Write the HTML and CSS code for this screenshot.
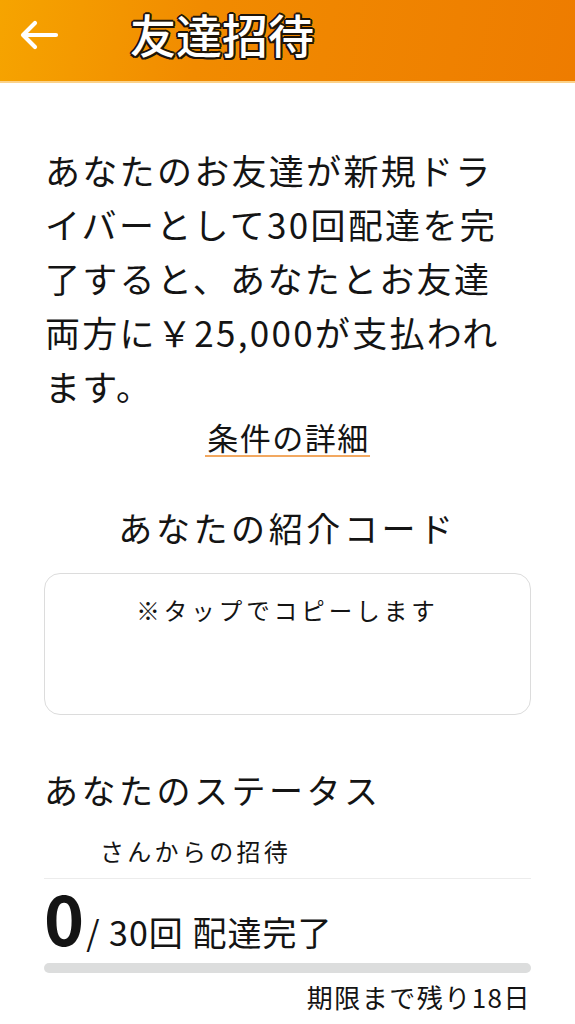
FILE: index.html
```html
<!DOCTYPE html>
<html lang="ja">
<head>
<meta charset="utf-8">
<title>友達招待</title>
<link rel="stylesheet" href="styles.css">
</head>
<body>
<header class="appbar">
  <svg class="back" width="40" height="30" viewBox="0 0 40 30" aria-hidden="true">
    <path d="M37 15 H5 M16 3 L4 15 L16 27" fill="none" stroke="#fff" stroke-width="4.2" stroke-linecap="round" stroke-linejoin="round"/>
  </svg>
  <h1 class="title">友達招待</h1>
</header>
<main class="content">
  <p class="intro">あなたのお友達が新規ドライバーとして30回配達を完了すると、あなたとお友達両方に￥25,000が支払われます。</p>
  <div class="details-row"><a class="details" href="#">条件の詳細</a></div>
  <h2 class="code-title">あなたの紹介コード</h2>
  <div class="code-box">
    <p class="code-hint">※タップでコピーします</p>
  </div>
  <h2 class="status-title">あなたのステータス</h2>
  <p class="inviter">さんからの招待</p>
  <div class="progress-row">
    <span class="count">0</span><span class="total">/ 30回 配達完了</span>
  </div>
  <div class="bar"><div class="bar-fill" style="width:0%"></div></div>
  <p class="remaining">期限まで残り18日</p>
</main>
</body>
</html>
```
FILE: styles.css
```css
* { box-sizing: border-box; }
html, body { margin: 0; padding: 0; }
body {
  background: #fff;
  color: #141414;
  font-family: "Noto Sans CJK JP", "Noto Sans", sans-serif;
  width: 575px;
  overflow: hidden;
}
.appbar {
  height: 83px;
  display: flex;
  align-items: center;
  padding-left: 19px;
  background: linear-gradient(100deg, #f6a400 0%, #f18b00 35%, #ee7c00 100%);
  border-bottom: 2px solid #fbd28a;
}
.back { display: block; margin-top: -12px; }
.title {
  margin: -16px 0 0 71px;
  font-size: 46px;
  font-weight: 500;
  letter-spacing: 0;
  color: #fff;
  line-height: 1;
  text-shadow:
    2px 0 0 #1e1408, -2px 0 0 #1e1408, 0 2px 0 #1e1408, 0 -2px 0 #1e1408,
    1.5px 1.5px 0 #1e1408, -1.5px 1.5px 0 #1e1408, 1.5px -1.5px 0 #1e1408, -1.5px -1.5px 0 #1e1408;
}
.content { padding: 0 44px; }
.intro {
  margin: 60px 0 0 1px;
  width: 470px;
  font-size: 35px;
  line-height: 54px;
  letter-spacing: 2.3px;
  font-weight: 400;
}
.details-row { text-align: center; margin-top: 6px; }
.details {
  display: inline-block;
  color: #141414;
  text-decoration: none;
  font-size: 31px;
  letter-spacing: 1.5px;
  line-height: 36px;
  padding-left: 2px;
  border-bottom: 2px solid #f2a860;
}
.code-title {
  margin: 51px 0 0;
  text-align: center;
  font-size: 34px;
  font-weight: 400;
  letter-spacing: 3.6px;
  line-height: 40px;
}
.code-box {
  margin-top: 25px;
  height: 142px;
  border: 1.5px solid #dcdcdc;
  border-radius: 16px;
  padding-top: 20px;
}
.code-hint {
  margin: 0;
  text-align: center;
  font-size: 23.5px;
  letter-spacing: 4px;
  line-height: 32px;
}
.status-title {
  margin: 55px 0 0 0;
  font-size: 34px;
  font-weight: 400;
  letter-spacing: 3.5px;
  line-height: 40px;
}
.inviter {
  margin: 24px 0 0 56px;
  font-size: 24px;
  letter-spacing: 3.3px;
  line-height: 34px;
}
.progress-row {
  border-top: 1.5px solid #ececec;
  margin-top: 10px;
  display: flex;
  align-items: baseline;
  height: 80px;
}
.count {
  font-size: 68px;
  font-weight: 700;
  line-height: 76px;
  letter-spacing: 0;
}
.total {
  font-size: 34px;
  letter-spacing: 1px;
  margin-left: 2px;
  line-height: 40px;
}
.bar {
  margin-top: 5px;
  height: 10px;
  background: #dcdddd;
  border-radius: 5px;
  overflow: hidden;
}
.bar-fill { height: 100%; background: #f08a00; }
.remaining {
  margin: 6px 0 0;
  text-align: right;
  font-size: 26px;
  letter-spacing: 1.5px;
  line-height: 36px;
}
```
